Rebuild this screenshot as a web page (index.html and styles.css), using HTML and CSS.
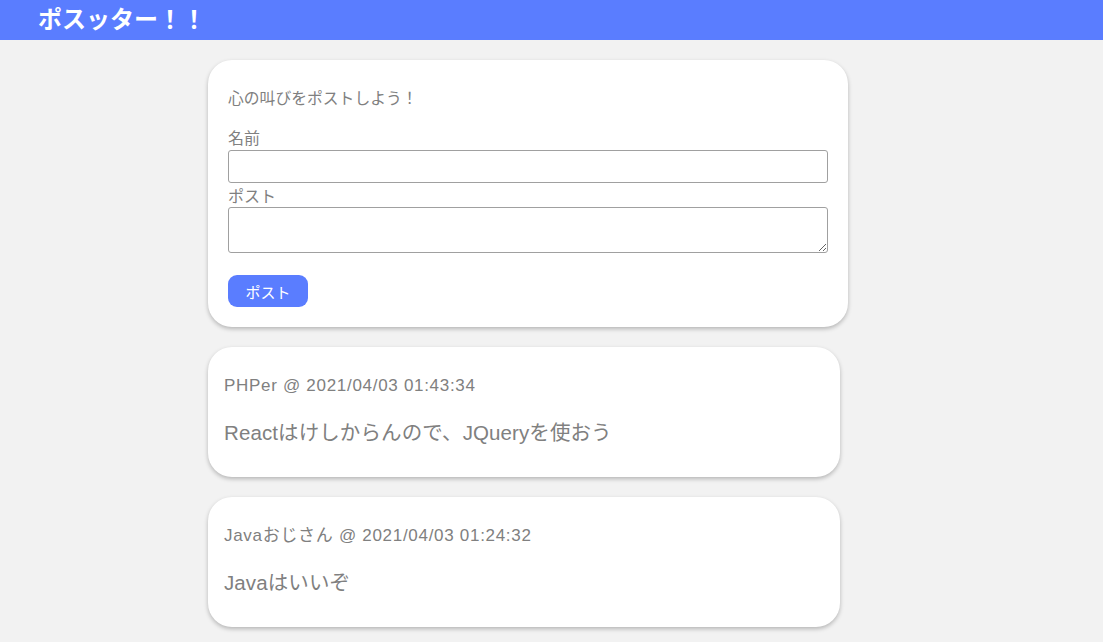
FILE: index.html
```html
<!DOCTYPE html>
<html lang="ja">
<head>
<meta charset="utf-8">
<title>ポスッター！！</title>
<link rel="stylesheet" href="styles.css">
</head>
<body>
<header class="header">
  <h1 class="logo">ポスッター！！</h1>
</header>
<main class="main">
  <form class="card form-card">
    <p class="lead">心の叫びをポストしよう！</p>
    <label class="label label-name" for="name">名前</label>
    <input class="input" id="name" type="text">
    <label class="label label-post" for="post">ポスト</label>
    <textarea class="textarea" id="post"></textarea>
    <button class="button" type="button">ポスト</button>
  </form>
  <article class="card post-card">
    <p class="meta">PHPer @ 2021/04/03 01:43:34</p>
    <p class="body">Reactはけしからんので、JQueryを使おう</p>
  </article>
  <article class="card post-card">
    <p class="meta">Javaおじさん @ 2021/04/03 01:24:32</p>
    <p class="body">Javaはいいぞ</p>
  </article>
</main>
</body>
</html>
```

FILE: styles.css
```css
* { box-sizing: border-box; }
html, body {
  margin: 0;
  padding: 0;
  background: #f2f2f2;
  font-family: "Liberation Sans", "Noto Sans CJK JP", sans-serif;
  color: #808080;
}
.header {
  height: 40px;
  background: #5a7dff;
  display: flex;
  align-items: center;
  padding-left: 38px;
}
.logo {
  margin: 0;
  color: #fff;
  font-size: 24px;
  font-weight: 700;
  line-height: 1;
}
.main {
  padding: 20px 0 20px 208px;
  display: flex;
  flex-direction: column;
  align-items: flex-start;
  gap: 20px;
}
.card {
  background: #fff;
  border-radius: 24px;
  box-shadow: 0 2px 4px rgba(0,0,0,0.25);
}
.form-card {
  width: 640px;
  padding: 20px;
  display: flex;
  flex-direction: column;
  align-items: flex-start;
}
.lead {
  margin: 9px 0 0;
  font-size: 15.8px;
  line-height: 20px;
}
.label {
  font-size: 16px;
  line-height: 20px;
}
.label-name { margin-top: 20px; }
.label-post { margin-top: 4px; }
.input {
  width: 600px;
  height: 33px;
  margin: 1px 0 0;
  border: 1px solid #a0a0a0;
  border-radius: 3px;
  font-size: 14px;
  padding: 2px 4px;
}
.textarea {
  width: 600px;
  height: 46px;
  margin: 0;
  border: 1px solid #a0a0a0;
  border-radius: 3px;
  font-size: 14px;
  padding: 2px 4px;
  resize: vertical;
}
.button {
  margin-top: 22px;
  width: 80px;
  height: 32px;
  border: none;
  border-radius: 9px;
  background: #5a7dff;
  color: #fff;
  font-family: "Liberation Sans", "Noto Sans CJK JP", sans-serif;
  font-size: 15px;
  padding: 0;
}
.post-card {
  width: 632px;
  height: 130px;
  padding: 16px;
}
.meta {
  margin: 13px 0 0;
  font-size: 17px;
  line-height: 20px;
  letter-spacing: 0.7px;
}
.body {
  margin: 25px 0 0;
  font-size: 20.5px;
  line-height: 24px;
  letter-spacing: 0.1px;
}
```
